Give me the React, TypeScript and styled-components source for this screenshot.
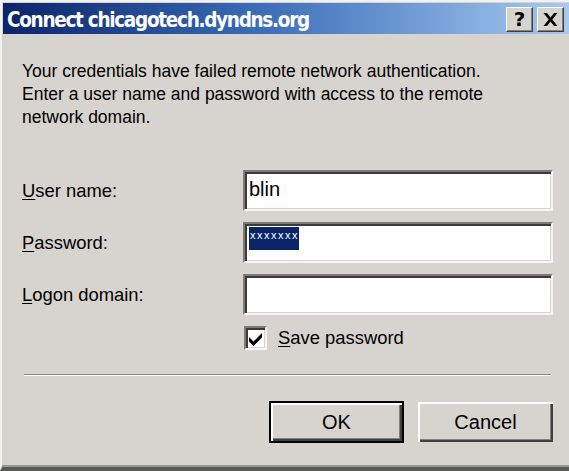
import React from "react";
import styled, { createGlobalStyle } from "styled-components";

const Global = createGlobalStyle`
  html, body { margin: 0; padding: 0; background: #d7d3cf; }
  body { width: 569px; height: 471px; overflow: hidden; }
`;

const Window = styled.div`
  box-sizing: border-box;
  width: 569px;
  height: 471px;
  background: #d7d3cf;
  border-left: 2px solid #f2f1ee;
  border-top: 2px solid #f2f1ee;
  border-bottom: 4px solid #5a5a5a;
  box-shadow: inset 0 -2px 0 #9a9895;
  display: flex;
  flex-direction: column;
  font-family: "Liberation Sans", Arial, sans-serif;
  color: #000;
`;

const TitleBar = styled.div`
  height: 31px;
  margin: 1px 0 0 1px;
  background: linear-gradient(to right, #0a246a 0%, #3a6cb8 45%, #a6caf0 100%);
  display: flex;
  align-items: center;
  padding: 0 5px 0 4px;
`;

const TitleText = styled.div`
  flex: 1;
  color: #fff;
  font-family: "DejaVu Sans Condensed", "DejaVu Sans", sans-serif;
  font-weight: bold;
  font-size: 20.5px;
  letter-spacing: -1.3px;
  white-space: nowrap;
  padding-top: 2px;
`;

const Controls = styled.div`
  display: flex;
  gap: 4px;
  margin-top: 1px;
`;

const CtlButton = styled.div`
  box-sizing: border-box;
  width: 27px;
  height: 25px;
  background: #d7d3cf;
  border: 1px solid;
  border-color: #ffffff #404040 #404040 #ffffff;
  box-shadow: inset -1px -1px 0 #808080;
  display: flex;
  align-items: center;
  justify-content: center;
  font-family: "DejaVu Sans", sans-serif;
  font-weight: bold;
  font-size: 20px;
  line-height: 1;
`;

const Body = styled.div`
  display: flex;
  flex-direction: column;
  padding: 0 16px 0 20px;
`;

const Message = styled.p`
  margin: 26px 0 0 0;
  font-size: 17.5px;
  line-height: 23px;
  width: 500px;
`;

const Form = styled.div`
  margin-top: 41px;
  display: grid;
  grid-template-columns: 221px 1fr;
  grid-auto-rows: 41px;
  row-gap: 11px;
  align-items: center;
`;

const Label = styled.label`
  font-size: 18.4px;
  u { text-decoration-thickness: 1px; text-underline-offset: 2px; }
`;

const Field = styled.div`
  box-sizing: border-box;
  height: 41px;
  background: #fff;
  border: 2px solid;
  border-color: #7d7b78 #f6f5f3 #f6f5f3 #7d7b78;
  box-shadow: inset 2px 2px 0 #3c3b3a, inset -1px -1px 0 #d7d3cf;
  display: flex;
  align-items: center;
  padding: 0 4px 2px 4px;
  font-size: 20px;
`;

const Selected = styled.span`
  align-self: flex-start;
  background: #0a246a;
  color: #fff;
  font-size: 11px;
  letter-spacing: 1.5px;
  height: 23px;
  line-height: 17px;
  padding: 0 0 0 1px;
  margin-top: 3px;
  display: inline-flex;
  align-items: flex-start;
`;

const CheckRow = styled.div`
  margin: 11px 0 0 222px;
  display: flex;
  align-items: center;
  gap: 11px;
  font-size: 18.4px;
  u { text-decoration-thickness: 1px; text-underline-offset: 2px; }
`;

const CheckBox = styled.div`
  box-sizing: border-box;
  width: 23px;
  height: 24px;
  background: #fff;
  border: 2px solid;
  border-color: #7d7b78 #f6f5f3 #f6f5f3 #7d7b78;
  box-shadow: inset 2px 2px 0 #3c3b3a, inset -1px -1px 0 #d7d3cf;
  display: flex;
  align-items: center;
  justify-content: center;
`;

const Separator = styled.div`
  margin: 24px 0 0 2px;
  width: 527px;
  height: 1px;
  background: #8a8884;
  border-bottom: 1px solid #fbfbfa;
`;

const ButtonRow = styled.div`
  margin-top: 25px;
  display: flex;
  justify-content: flex-end;
  gap: 14px;
`;

const Button = styled.button<{ $default?: boolean }>`
  box-sizing: border-box;
  width: 135px;
  background: #d7d3cf;
  font-family: "Liberation Sans", Arial, sans-serif;
  font-size: 20px;
  color: #000;
  padding: 0;
  border: ${(p) => (p.$default ? "2px solid #000" : "none")};
  box-shadow: inset 2px 2px 0 #ffffff, inset -2px -2px 0 #404040, inset -3px -3px 0 #808080;
  margin-top: ${(p) => (p.$default ? "0" : "1px")};
  height: ${(p) => (p.$default ? "42px" : "40px")};
`;

export default function App() {
  return (
    <>
      <Global />
      <Window>
        <TitleBar>
          <TitleText>Connect chicagotech.dyndns.org</TitleText>
          <Controls>
            <CtlButton>?</CtlButton>
            <CtlButton>
              <svg width="15" height="13" viewBox="0 0 15 13">
                <path d="M0.5 0 L4 0 L7.5 4.5 L11 0 L14.5 0 L9.3 6.5 L14.5 13 L11 13 L7.5 8.5 L4 13 L0.5 13 L5.7 6.5 Z" fill="#000" />
              </svg>
            </CtlButton>
          </Controls>
        </TitleBar>
        <Body>
          <Message>
            Your credentials have failed remote network authentication. Enter a user name and password with access to the remote network domain.
          </Message>
          <Form>
            <Label><u>U</u>ser name:</Label>
            <Field>blin</Field>
            <Label><u>P</u>assword:</Label>
            <Field>
              <Selected>xxxxxxx</Selected>
            </Field>
            <Label><u>L</u>ogon domain:</Label>
            <Field />
          </Form>
          <CheckRow>
            <CheckBox>
              <svg width="15" height="15" viewBox="0 0 15 15">
                <path d="M1 6 L5.5 10.5 L14 2 L14 6.5 L5.5 15 L1 10.5 Z" fill="#000" />
              </svg>
            </CheckBox>
            <span><u>S</u>ave password</span>
          </CheckRow>
          <Separator />
          <ButtonRow>
            <Button $default>OK</Button>
            <Button>Cancel</Button>
          </ButtonRow>
        </Body>
      </Window>
    </>
  );
}
